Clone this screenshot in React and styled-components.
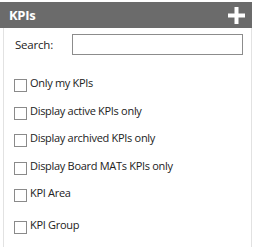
import React from "react";
import styled, { createGlobalStyle } from "styled-components";

const GlobalStyle = createGlobalStyle`
    body {
        margin: 0;
        background: #ffffff;
        font-family: "Open Sans", "Noto Sans", sans-serif;
    }
`;

const Panel = styled.div`
    width: 253px;
    height: 247px;
    padding-top: 2px;
    box-sizing: border-box;
    display: flex;
    flex-direction: column;
`;

const Header = styled.div`
    width: 252px;
    height: 26px;
    background-color: #6b6b6b;
    display: flex;
    align-items: center;
    justify-content: space-between;
    padding: 0 7px 0 9px;
    box-sizing: border-box;
`;

const Title = styled.h2`
    margin: 0;
    color: #ffffff;
    font-size: 13px;
    font-weight: 700;
    letter-spacing: -0.3px;
`;

const AddButton = styled.button`
    border: none;
    background: none;
    padding: 0;
    width: 17px;
    height: 17px;
    display: flex;
    cursor: pointer;
`;

const Body = styled.div`
    flex: 1;
    margin-left: 3px;
    width: 249px;
    box-sizing: border-box;
    border-left: 1px solid #e2e2e2;
    border-right: 1px solid #e2e2e2;
    padding: 6px 8px 0 10px;
    display: flex;
    flex-direction: column;
`;

const SearchRow = styled.div`
    display: flex;
    align-items: center;
    justify-content: space-between;
    height: 21px;
    margin-bottom: 20px;
`;

const Label = styled.span`
    font-size: 11.5px;
    letter-spacing: -0.2px;
    color: #222222;
    padding-left: 1px;
`;

const SearchInput = styled.input`
    width: 171px;
    height: 21px;
    box-sizing: border-box;
    border: 1px solid #8c8c8c;
    outline: none;
    padding: 0 4px;
`;

const Options = styled.div`
    display: flex;
    flex-direction: column;
`;

const Option = styled.label`
    display: flex;
    align-items: flex-start;
    gap: 3px;
    height: ${(p) => (p.tall ? "32px" : "27.5px")};
    font-size: 11px;
    letter-spacing: -0.3px;
    color: #222222;
    cursor: pointer;
`;

const Box = styled.input.attrs({ type: "checkbox" })`
    appearance: none;
    margin: 4px 0 0 0;
    width: 13px;
    height: 13px;
    border: 1px solid #8a8a8a;
    background: #ffffff;
    flex-shrink: 0;
`;

const options = [
    "Only my KPIs",
    "Display active KPIs only",
    "Display archived KPIs only",
    "Display Board MATs KPIs only",
    "KPI Area",
    "KPI Group",
];

export default class App extends React.Component {
    render() {
        return (
            <Panel>
                <GlobalStyle />
                <Header>
                    <Title>KPIs</Title>
                    <AddButton aria-label="Add KPI">
                        <svg width="17" height="17" viewBox="0 0 17 17">
                            <rect x="6.5" y="0" width="4" height="17" fill="#fff" />
                            <rect x="0" y="6.5" width="17" height="4" fill="#fff" />
                        </svg>
                    </AddButton>
                </Header>
                <Body>
                    <SearchRow>
                        <Label>Search:</Label>
                        <SearchInput />
                    </SearchRow>
                    <Options>
                        {options.map((o, i) => (
                            <Option key={o} tall={i === 4}>
                                <Box />
                                <span>{o}</span>
                            </Option>
                        ))}
                    </Options>
                </Body>
            </Panel>
        );
    }
}
